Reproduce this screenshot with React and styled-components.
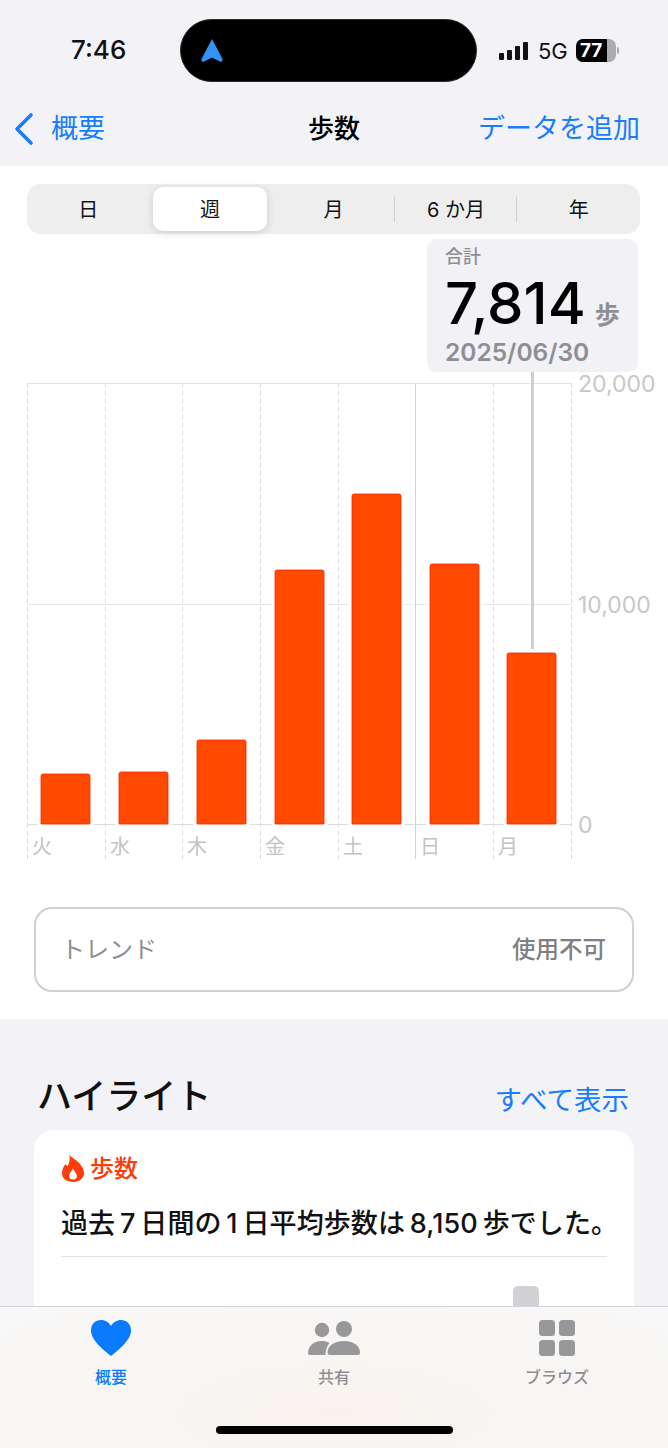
import React from 'react';
import styled, { createGlobalStyle } from 'styled-components';

const FONT = `"Inter", "Noto Sans CJK JP", sans-serif`;
const BLUE = '#1a7dfb';

const days = [
  { label: '火', x: 41, top: 774 },
  { label: '水', x: 119, top: 772 },
  { label: '木', x: 197, top: 740 },
  { label: '金', x: 275, top: 570 },
  { label: '土', x: 352, top: 494 },
  { label: '日', x: 430, top: 564 },
  { label: '月', x: 507, top: 653 },
];
const gridX = [27, 105, 182, 260, 338, 415, 493, 571];
const CHART_TOP = 370;

const barPath = (d) =>
  `M${d.x} 824 V${d.top + 2} Q${d.x} ${d.top} ${d.x + 2} ${d.top} H${d.x + 47} Q${d.x + 49} ${d.top} ${d.x + 49} ${d.top + 2} V824 Z`;

export default function App() {
  return (
    <>
      <GlobalStyle />
      <Screen>
        <TopArea>
          <StatusBar>
            <Clock>7:46</Clock>
            <Island>
              <svg width="22" height="25" viewBox="0 0 22 25">
                <path d="M11 1 L21.5 21 Q22 24.5 19 23.5 L12 20 Q11 19.6 10 20 L3 23.5 Q0 24.5 .5 21 Z" fill="#2f94f5" />
              </svg>
            </Island>
            <StatusRight>
              <svg width="31" height="20" viewBox="0 0 31 20">
                <rect x="0" y="12" width="5" height="7" rx="1" fill="#111" />
                <rect x="8" y="9" width="5" height="10" rx="1" fill="#111" />
                <rect x="16" y="5" width="5" height="14" rx="1" fill="#111" />
                <rect x="24" y="1" width="5" height="18" rx="1" fill="#111" />
              </svg>
              <Network>5G</Network>
              <Battery>
                <BatteryFill>77</BatteryFill>
              </Battery>
              <BatteryTip />
            </StatusRight>
          </StatusBar>
          <NavBar>
            <BackLink>
              <svg width="22" height="34" viewBox="0 0 22 34" fill="none">
                <path d="M18 3 L4 17 L18 31" stroke={BLUE} strokeWidth="3.6" strokeLinecap="round" strokeLinejoin="round" />
              </svg>
              <NavText>概要</NavText>
            </BackLink>
            <NavTitle>歩数</NavTitle>
            <NavText>データを追加</NavText>
          </NavBar>
        </TopArea>

        <ChartSection>
          <Segments>
            <Segment>日</Segment>
            <Segment $active>週</Segment>
            <Segment>月</Segment>
            <Segment $divider>6 か月</Segment>
            <Segment $divider>年</Segment>
          </Segments>

          <ChartWrap>
            <svg width="668" height="496" viewBox={`0 ${CHART_TOP} 668 496`}>
              <line x1="27" x2="571" y1="383.5" y2="383.5" stroke="#e4e4e6" />
              <line x1="27" x2="571" y1="604.5" y2="604.5" stroke="#e8e8ea" />
              <line x1="27" x2="571" y1="824.5" y2="824.5" stroke="#dcdcde" />
              {gridX.map((x) => (
                <line
                  key={x}
                  x1={x + 0.5}
                  x2={x + 0.5}
                  y1="383"
                  y2="859"
                  stroke={x === 415 ? '#d2d2d4' : '#d9d9db'}
                  strokeDasharray={x === 415 ? undefined : '4 4'}
                />
              ))}
              <line x1="532.5" x2="532.5" y1="370" y2="649" stroke="#cdcdd3" strokeWidth="3" />
              {days.map((d) => (
                <path key={d.label} d={barPath(d)} fill="none" stroke="#fff" strokeWidth="7" />
              ))}
              {days.map((d) => (
                <path key={d.label} d={barPath(d)} fill="#ff4a00" stroke="#ff2200" strokeWidth="0.8" />
              ))}
              {days.map((d, i) => (
                <DayLabel key={d.label} x={gridX[i] + 5} y="854">{d.label}</DayLabel>
              ))}
              <AxisLabel x="578" y="392">20,000</AxisLabel>
              <AxisLabel x="578" y="613">10,000</AxisLabel>
              <AxisLabel x="578" y="833">0</AxisLabel>
            </svg>
            <Callout>
              <CalloutLabel>合計</CalloutLabel>
              <CalloutValue>
                7,814<CalloutUnit>歩</CalloutUnit>
              </CalloutValue>
              <CalloutDate>2025/06/30</CalloutDate>
            </Callout>
          </ChartWrap>

          <TrendCard>
            <TrendLabel>トレンド</TrendLabel>
            <TrendValue>使用不可</TrendValue>
          </TrendCard>
        </ChartSection>

        <Highlights>
          <HighlightHead>
            <HighlightTitle>ハイライト</HighlightTitle>
            <ShowAll>すべて表示</ShowAll>
          </HighlightHead>
          <HighlightCard>
            <CardLabel>
              <svg width="22" height="28" viewBox="0 0 22 28">
                <path
                  fillRule="evenodd"
                  d="M7 0 C8 3 14 5 18 10 C20.5 13 22 16 22 19 C22 24.5 17.5 28 11 28 C4.5 28 0 24.5 0 19 C0 15.5 1.5 12.5 3.5 10 C4 11 4.8 11.8 5.8 12 C7.5 8.5 8.5 4 7 0 Z M11 14 C11.5 17 15 19 15 22 C15 24.5 13.2 25.5 11 25.5 C8.8 25.5 7 24.5 7 22 C7 19 10.5 17 11 14 Z"
                  fill="#ff3b0a"
                />
              </svg>
              <CardLabelText>歩数</CardLabelText>
            </CardLabel>
            <CardText>{'過去\u20097\u2009日間の\u20091\u2009日平均歩数は\u20098,150\u2009歩でした。'}</CardText>
            <CardRule />
            <MiniBar />
          </HighlightCard>
        </Highlights>

        <TabBar>
          <Tab $active>
            <svg width="40" height="36" viewBox="0 0 40 36">
              <path d="M20 36 C18 34 0 22 0 10.5 C0 4 4.5 0 10 0 C14.5 0 18 2.5 20 6 C22 2.5 25.5 0 30 0 C35.5 0 40 4 40 10.5 C40 22 22 34 20 36 Z" fill="#0a7aff" />
            </svg>
            <TabText>概要</TabText>
          </Tab>
          <Tab>
            <svg width="52" height="36" viewBox="0 0 52 36" fill="#98989a">
              <circle cx="14" cy="10" r="7.2" />
              <circle cx="36" cy="9" r="8" />
              <path d="M0 33 C0 26 6 21 13 21 C16 21 19 21.5 21.5 23 C19 26 17.5 30 17.5 35 L2 35 Q0 35 0 33 Z" />
              <path d="M19.5 32.5 C19.5 25.5 27 21 36 21 C45 21 52 25.5 52 32.5 Q52 35 49.5 35 L22 35 Q19.5 35 19.5 32.5 Z" />
            </svg>
            <TabText>共有</TabText>
          </Tab>
          <Tab>
            <svg width="36" height="36" viewBox="0 0 36 36" fill="#98989a">
              <rect x="0" y="0" width="16" height="16" rx="3.5" />
              <rect x="20" y="0" width="16" height="16" rx="3.5" />
              <rect x="0" y="20" width="16" height="16" rx="3.5" />
              <rect x="20" y="20" width="16" height="16" rx="3.5" />
            </svg>
            <TabText>ブラウズ</TabText>
          </Tab>
          <HomeBar />
        </TabBar>
      </Screen>
    </>
  );
}

const GlobalStyle = createGlobalStyle`
  html, body {
    margin: 0;
    padding: 0;
    background: #f2f2f7;
  }
  * {
    box-sizing: border-box;
  }
`;

const Screen = styled.div`
  position: relative;
  width: 668px;
  height: 1448px;
  overflow: hidden;
  background: #f2f2f7;
  font-family: ${FONT};
  color: #000;
`;

const TopArea = styled.div`
  height: 166px;
  background: #f2f2f7;
`;

const StatusBar = styled.div`
  height: 100px;
  display: flex;
  align-items: flex-start;
  padding-top: 19px;
`;

const Clock = styled.div`
  width: 180px;
  padding-left: 71px;
  padding-top: 12px;
  font-size: 26px;
  line-height: 38px;
  font-weight: 500;
  color: #111;
`;

const Island = styled.div`
  width: 297px;
  height: 63px;
  display: flex;
  align-items: center;
  padding-left: 20px;
  border-radius: 32px;
  background: #000;
  border: 1px solid #2a2a2c;
`;

const StatusRight = styled.div`
  display: flex;
  align-items: center;
  height: 63px;
  padding-left: 22px;
`;

const Network = styled.div`
  margin-left: 8px;
  font-size: 22px;
  font-weight: 400;
  color: #111;
`;

const Battery = styled.div`
  width: 40px;
  height: 23px;
  margin-left: 8px;
  border-radius: 7px;
  overflow: hidden;
  background: #acacae;
`;

const BatteryFill = styled.div`
  width: 77%;
  height: 100%;
  background: #000;
  color: #fff;
  font-size: 19px;
  line-height: 23px;
  font-weight: 700;
  text-align: center;
`;

const BatteryTip = styled.div`
  width: 2px;
  height: 7px;
  margin-left: 1px;
  border-radius: 0 2px 2px 0;
  background: #acacae;
`;

const NavBar = styled.div`
  position: relative;
  height: 58px;
  display: flex;
  align-items: center;
  justify-content: space-between;
  padding: 0 28px 0 13px;
`;

const BackLink = styled.div`
  display: flex;
  align-items: center;
  gap: 16px;
`;

const NavText = styled.div`
  margin-bottom: 6px;
  font-size: 27px;
  color: ${BLUE};
`;

const NavTitle = styled.div`
  position: absolute;
  left: 0;
  right: 0;
  padding-bottom: 6px;
  text-align: center;
  font-size: 26px;
  font-weight: 500;
  pointer-events: none;
`;

const ChartSection = styled.section`
  height: 853px;
  padding-top: 18px;
  background: #fff;
`;

const Segments = styled.div`
  display: grid;
  grid-template-columns: repeat(5, 1fr);
  align-items: center;
  height: 50px;
  margin: 0 28px 0 27px;
  border-radius: 14px;
  background: #eeeeef;
`;

const Segment = styled.div`
  position: relative;
  height: 44px;
  margin: ${(p) => (p.$active ? '0 5px 0 3px' : '0')};
  padding-bottom: 2px;
  display: flex;
  align-items: center;
  justify-content: center;
  border-radius: 10px;
  font-size: 20px;
  color: #111;
  background: ${(p) => (p.$active ? '#fff' : 'transparent')};
  box-shadow: ${(p) => (p.$active ? '0 2px 8px rgba(0,0,0,.14)' : 'none')};

  &::before {
    content: '';
    display: ${(p) => (p.$divider ? 'block' : 'none')};
    position: absolute;
    left: -1px;
    top: 9px;
    width: 1px;
    height: 26px;
    background: #d0d0d2;
  }
`;

const ChartWrap = styled.div`
  position: relative;
  height: 632px;
  padding-top: 136px;
  svg {
    display: block;
  }
`;

const DayLabel = styled.text`
  font-family: ${FONT};
  font-size: 20px;
  fill: #c3c3c5;
`;

const AxisLabel = styled.text`
  font-family: ${FONT};
  font-size: 23px;
  fill: #c7c7c9;
`;

const Callout = styled.div`
  position: absolute;
  left: 427px;
  top: 5px;
  width: 211px;
  height: 133px;
  padding: 5px 0 0 18px;
  border-radius: 9px;
  background: #f1f1f6;
`;

const CalloutLabel = styled.div`
  font-size: 18px;
  line-height: 26px;
  font-weight: 500;
  color: #8e8e93;
`;

const CalloutValue = styled.div`
  font-size: 58px;
  line-height: 66px;
  font-weight: 500;
  color: #000;
`;

const CalloutUnit = styled.span`
  margin-left: 9px;
  font-size: 25px;
  line-height: 1;
  font-weight: 600;
  color: #8e8e93;
`;

const CalloutDate = styled.div`
  font-size: 24.5px;
  line-height: 32px;
  font-weight: 600;
  color: #8e8e93;
`;

const TrendCard = styled.div`
  height: 85px;
  margin: 41px 34px 0;
  display: flex;
  align-items: center;
  justify-content: space-between;
  padding: 0 26px 4px 25px;
  border: 2px solid #d0d0d4;
  border-radius: 18px;
`;

const TrendLabel = styled.div`
  font-size: 24px;
  color: #8e8e93;
`;

const TrendValue = styled.div`
  font-size: 23.5px;
  font-weight: 500;
  color: #808084;
`;

const Highlights = styled.section`
  padding: 0 34px;
`;

const HighlightHead = styled.div`
  height: 111px;
  display: flex;
  align-items: flex-end;
  justify-content: space-between;
  padding: 0 5px 10px 3px;
`;

const HighlightTitle = styled.h2`
  margin: 0;
  font-size: 35px;
  line-height: 48px;
  font-weight: 500;
  color: #111;
`;

const ShowAll = styled.div`
  margin-bottom: -1px;
  font-size: 27.5px;
  line-height: 42px;
  color: ${BLUE};
`;

const HighlightCard = styled.div`
  height: 300px;
  padding: 24px 27px 0 28px;
  border-radius: 20px;
  background: #fff;
`;

const CardLabel = styled.div`
  display: flex;
  align-items: center;
  gap: 6px;
  height: 28px;
`;

const CardLabelText = styled.span`
  margin-top: 2px;
  font-size: 24px;
  line-height: 28px;
  font-weight: 500;
  color: #ff3b0a;
`;

const CardText = styled.p`
  margin: 24px 0 0 -1px;
  font-size: 27px;
  line-height: 36px;
  font-weight: 500;
  letter-spacing: 0.1px;
  white-space: nowrap;
  color: #111;
`;

const CardRule = styled.div`
  height: 1px;
  margin: 14px 0 0 -1px;
  background: #e4e4e6;
`;

const MiniBar = styled.div`
  width: 26px;
  height: 60px;
  margin: 29px 0 0 451px;
  border-radius: 5px;
  background: #d1d1d6;
`;

const TabBar = styled.nav`
  position: absolute;
  left: 0;
  right: 0;
  bottom: 0;
  height: 142px;
  display: grid;
  grid-template-columns: 222px 224px 222px;
  padding-top: 13px;
  border-top: 1px solid #d4d4d8;
  background: radial-gradient(ellipse at 50% 75%, #f8f3ef 0%, #f8f6f4 55%, #f8f8f8 100%);
`;

const Tab = styled.div`
  display: flex;
  flex-direction: column;
  align-items: center;
  color: ${(p) => (p.$active ? '#0a7aff' : '#8e8e93')};
  svg {
    display: block;
  }
`;

const TabText = styled.div`
  margin-top: 10px;
  font-size: 16px;
  line-height: 22px;
  font-weight: 500;
`;

const HomeBar = styled.div`
  position: absolute;
  left: 216px;
  bottom: 14px;
  width: 237px;
  height: 8px;
  border-radius: 4px;
  background: #000;
`;
